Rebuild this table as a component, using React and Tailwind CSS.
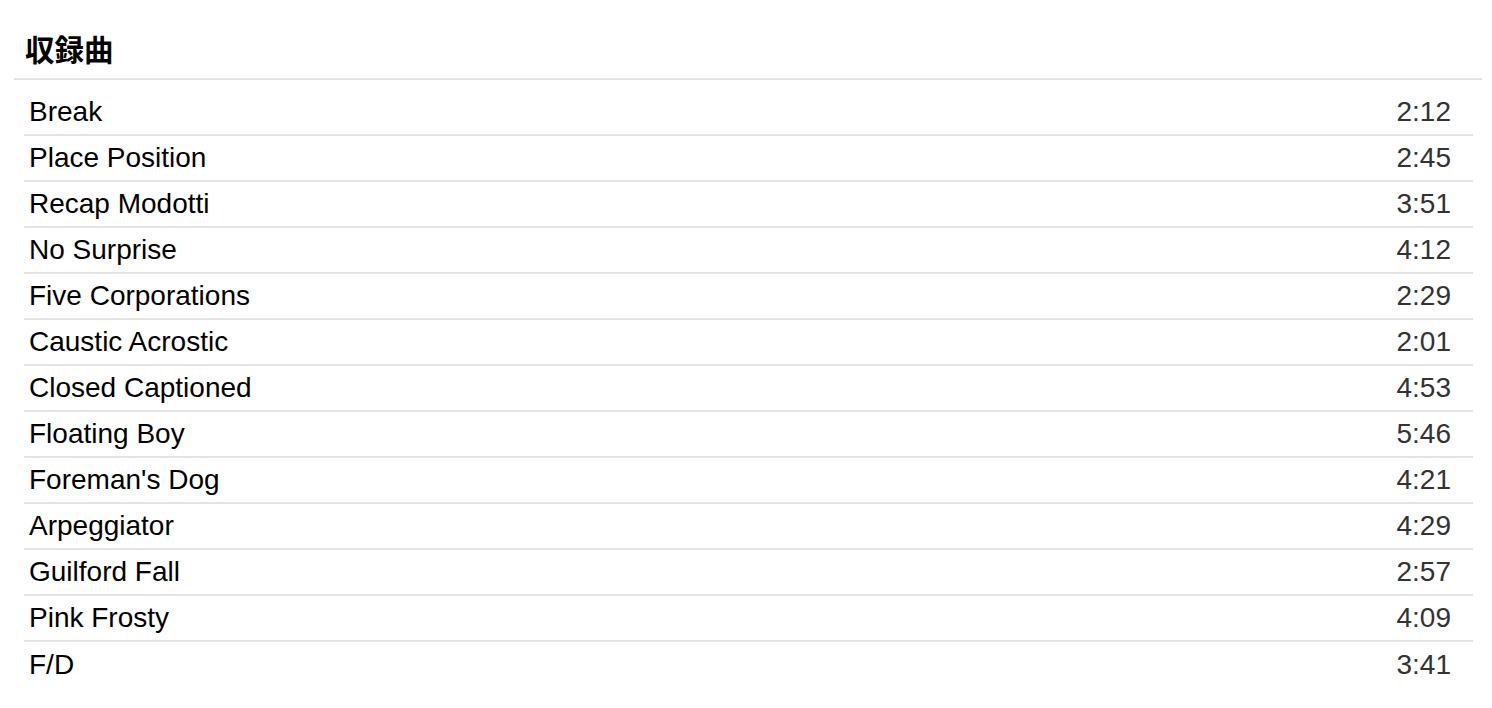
import React from "react";

const tracks = [
  ["Break", "2:12"],
  ["Place Position", "2:45"],
  ["Recap Modotti", "3:51"],
  ["No Surprise", "4:12"],
  ["Five Corporations", "2:29"],
  ["Caustic Acrostic", "2:01"],
  ["Closed Captioned", "4:53"],
  ["Floating Boy", "5:46"],
  ["Foreman's Dog", "4:21"],
  ["Arpeggiator", "4:29"],
  ["Guilford Fall", "2:57"],
  ["Pink Frosty", "4:09"],
  ["F/D", "3:41"],
];

export default function App() {
  return (
    <div className="w-[1492px] h-[708px] bg-white pl-[14px] pr-[10px] pt-[28px] font-['Liberation_Sans','Noto_Sans_CJK_JP',sans-serif]">
      <div className="border-b-2 border-[#e3e3e3] pl-[11px] pb-[10px]">
        <h2 className="text-[29.5px] leading-[40px] font-bold text-black font-['Noto_Sans_CJK_JP',sans-serif]">収録曲</h2>
      </div>
      <ul className="ml-[10px] mr-[9px] mt-[10px]">
        {tracks.map(([t, d], i) => (
          <li
            key={t}
            className={`flex items-center justify-between h-[46px] pl-[5px] pr-[22px] ${
              i < tracks.length - 1 ? "border-b-2 border-[#e3e3e3]" : ""
            }`}
          >
            <span className="text-[28px] leading-[32px] text-black">{t}</span>
            <span className="text-[28px] leading-[32px] text-[#333333]">{d}</span>
          </li>
        ))}
      </ul>
    </div>
  );
}
